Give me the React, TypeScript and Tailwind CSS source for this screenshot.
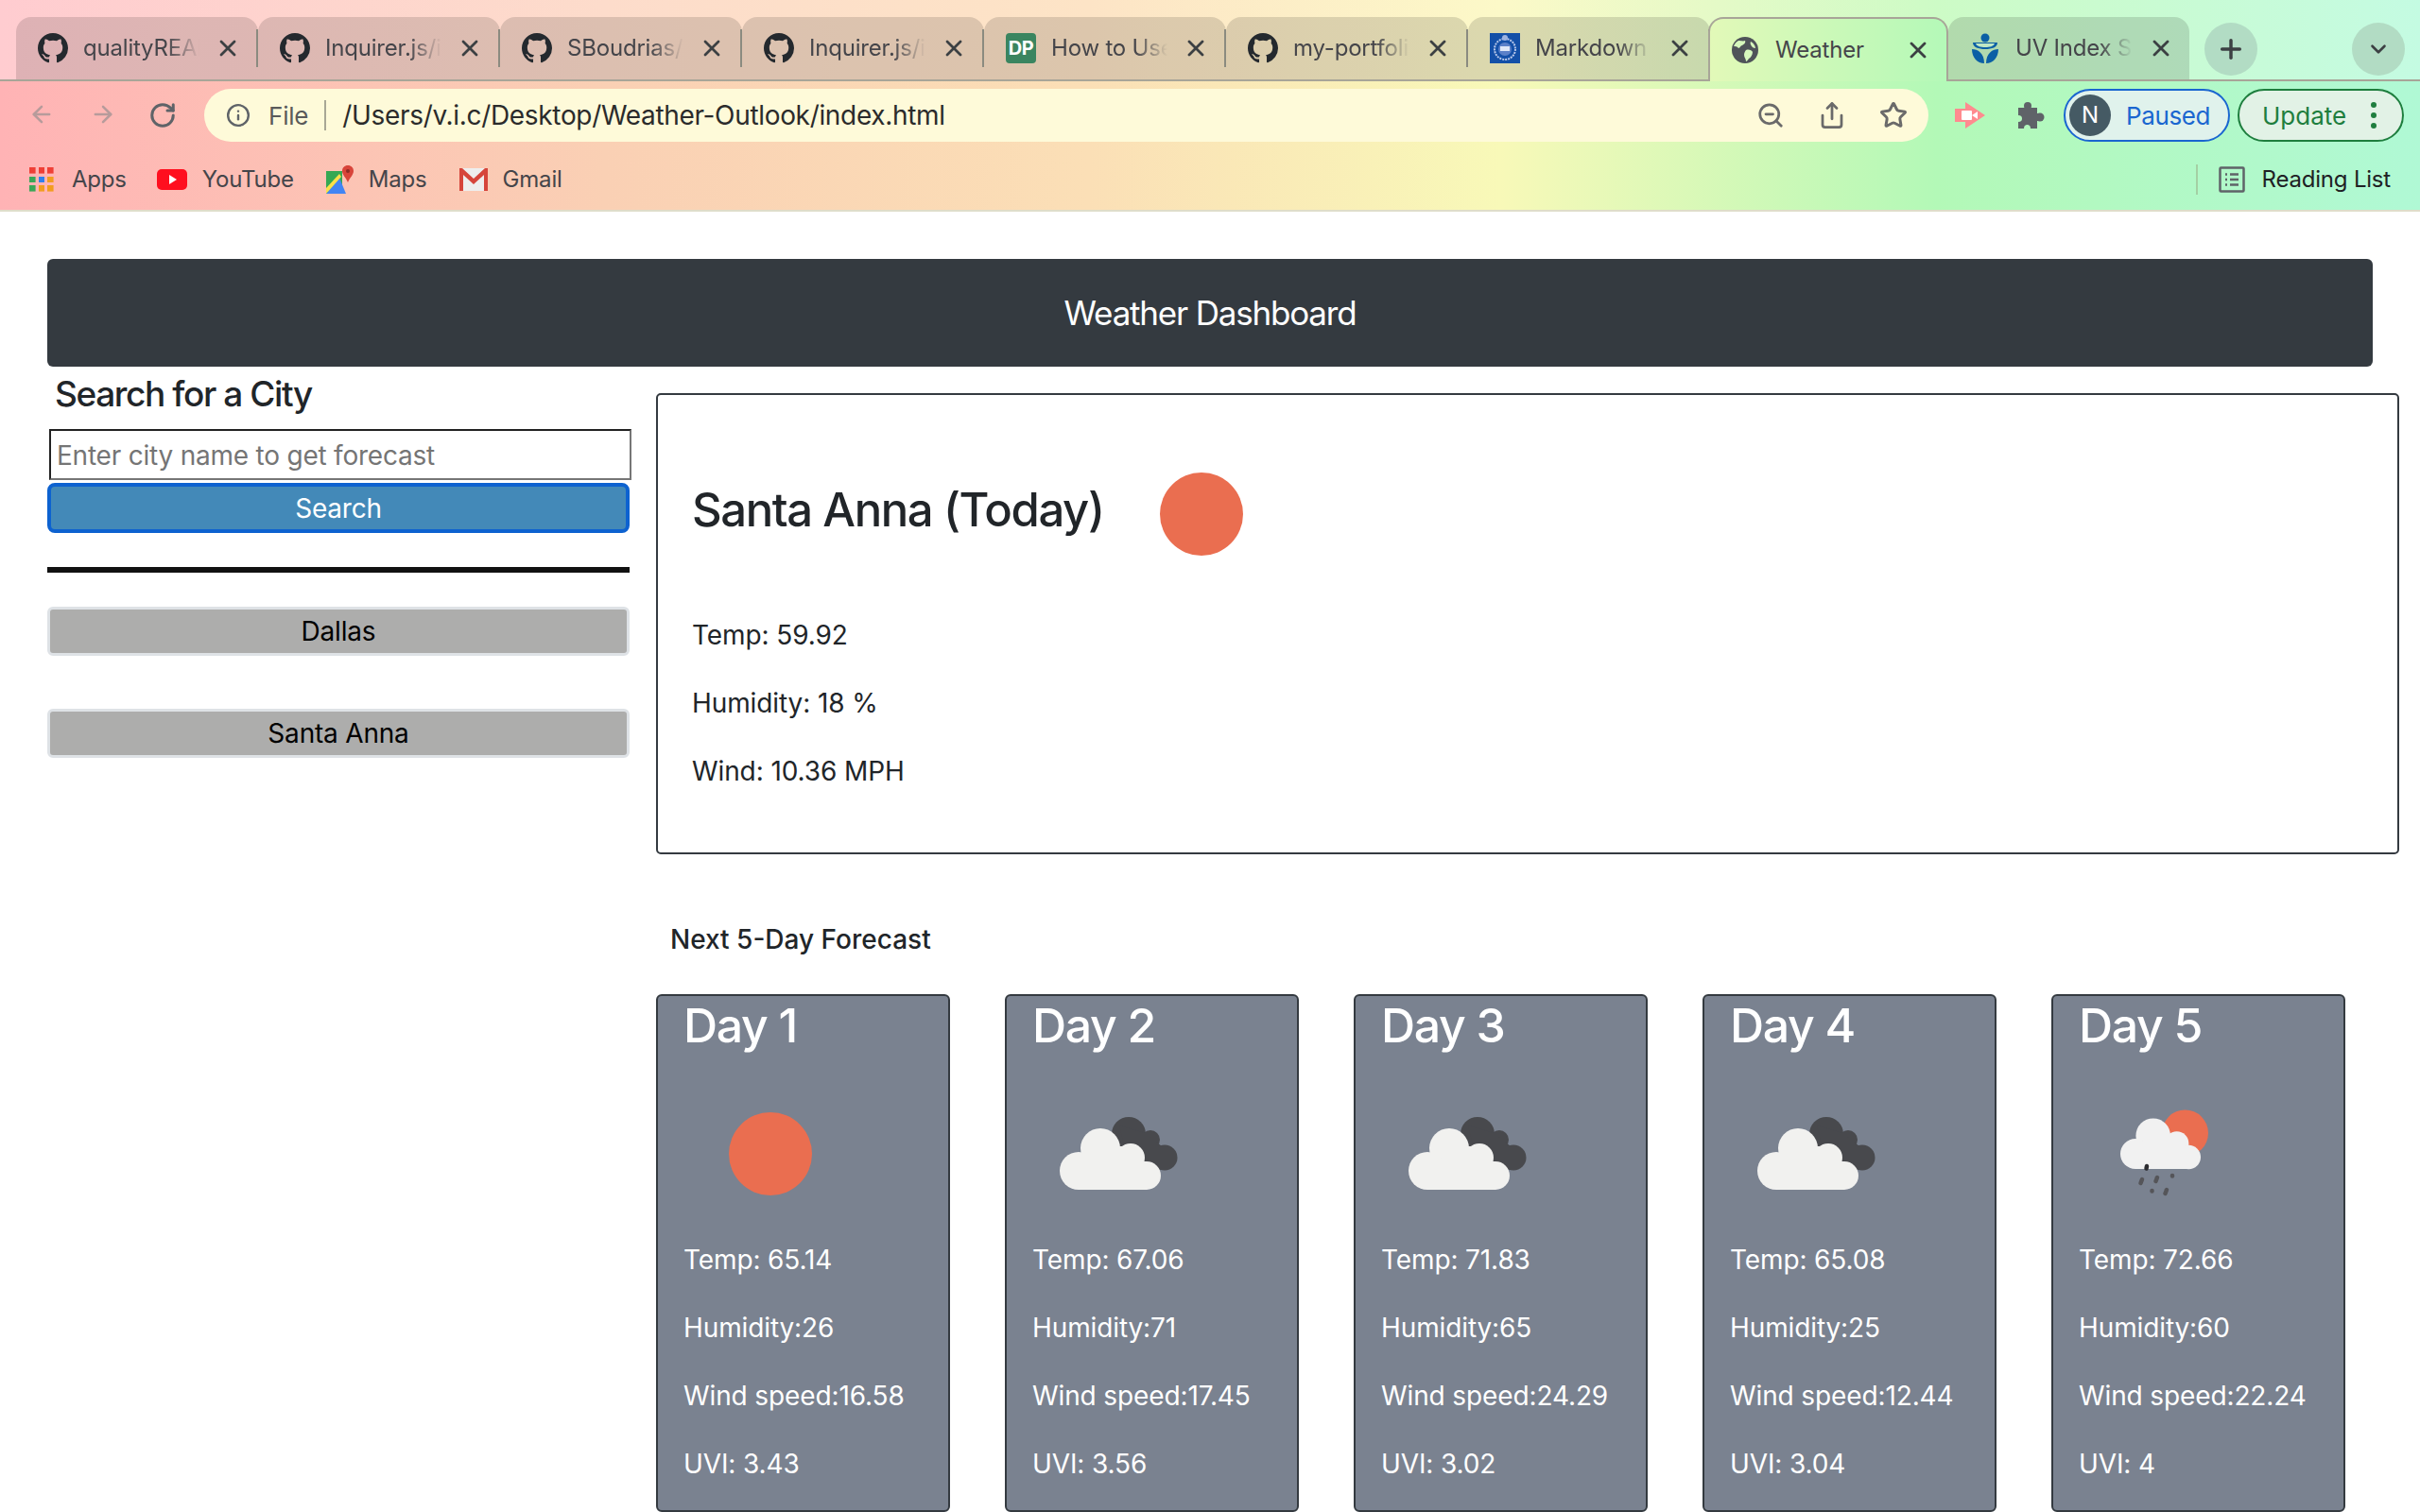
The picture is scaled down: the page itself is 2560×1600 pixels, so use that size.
import { ArrowLeft, ArrowRight, RotateCw, Info, ZoomOut, Share, Star, Plus, ChevronDown, X } from "lucide-react";
import type { ReactNode } from "react";

const ghPath = "M8 0C3.58 0 0 3.58 0 8c0 3.54 2.29 6.53 5.47 7.59.4.07.55-.17.55-.38 0-.19-.01-.82-.01-1.49-2.01.37-2.53-.49-2.69-.94-.09-.23-.48-.94-.82-1.13-.28-.15-.68-.52-.01-.53.63-.01 1.08.58 1.23.82.72 1.21 1.87.87 2.33.66.07-.52.28-.87.51-1.07-1.78-.2-3.64-.89-3.64-3.95 0-.87.31-1.59.82-2.15-.08-.2-.36-1.02.08-2.12 0 0 .67-.21 2.2.82.64-.18 1.32-.27 2-.27.68 0 1.36.09 2 .27 1.53-1.04 2.2-.82 2.2-.82.44 1.1.16 1.92.08 2.12.51.56.82 1.27.82 2.15 0 3.07-1.87 3.75-3.65 3.95.29.25.54.73.54 1.48 0 1.07-.01 1.93-.01 2.2 0 .21.15.46.55.38A8.013 8.013 0 0016 8c0-4.42-3.58-8-8-8z";

const GitHubIcon = () => (
  <svg viewBox="0 0 16 16" className="w-8 h-8 shrink-0"><path d={ghPath} fill="#24292e" /></svg>
);
const DpIcon = () => (
  <div className="w-8 h-8 shrink-0 rounded-sm bg-[#3a8560] text-white text-[20px] font-bold flex items-center justify-center leading-none tracking-tight">DP</div>
);
const SealIcon = () => (
  <svg viewBox="0 0 32 32" className="w-8 h-8 shrink-0">
    <rect width="32" height="32" fill="#1450a8" />
    <circle cx="16" cy="17" r="11" fill="none" stroke="#b9c8ea" strokeWidth="2" strokeDasharray="2 1" />
    <circle cx="16" cy="17" r="7" fill="#5b80c8" />
    <rect x="11" y="14" width="10" height="5" fill="#dfe7f7" />
    <circle cx="16" cy="5" r="3" fill="#9db3e0" />
  </svg>
);
const GlobeIcon = () => (
  <svg viewBox="0 0 32 32" className="w-8 h-8 shrink-0">
    <circle cx="16" cy="16" r="14" fill="#4f5359" />
    <path d="M9 6c3 0 5 1 7 0 1 2-1 4-3 5-2 0-2 3-4 3-1-2-4-2-5-2 1-3 3-5 5-6zM17 16c3-1 6 0 7 2 0 3-2 6-4 7-1 1-2 3-3 3 0-3-2-4-2-7 0-2 1-4 2-5zM22 7c2 1 5 4 5 7-2 0-3-1-4-2-1-2-2-3-1-5z" fill="#d6f7bd" />
  </svg>
);
const EpaIcon = () => (
  <svg viewBox="0 0 32 32" className="w-8 h-8 shrink-0">
    <circle cx="16" cy="5" r="4.5" fill="#0b5fa5" />
    <path d="M3 10h26c0 5-6 7-13 7S3 15 3 10z" fill="#0b5fa5" />
    <path d="M6 11h20c-1 3-5 4-10 4s-9-1-10-4z" fill="#bfe7c4" />
    <path d="M2 17c6 0 13 4 13 15C8 32 2 26 2 17zM30 17c-6 0-13 4-13 15 7 0 13-6 13-15z" fill="#0b5fa5" />
  </svg>
);

const tabs: { icon: ReactNode; label: string; active?: boolean }[] = [
  { icon: <GitHubIcon />, label: "qualityREADME" },
  { icon: <GitHubIcon />, label: "Inquirer.js/inquirer" },
  { icon: <GitHubIcon />, label: "SBoudrias/Inquirer" },
  { icon: <GitHubIcon />, label: "Inquirer.js/inquirer" },
  { icon: <DpIcon />, label: "How to Use" },
  { icon: <GitHubIcon />, label: "my-portfolio" },
  { icon: <SealIcon />, label: "Markdown syntax" },
  { icon: <GlobeIcon />, label: "Weather", active: true },
  { icon: <EpaIcon />, label: "UV Index Scale" },
];

function Tab({ icon, label, active, last }: { icon: ReactNode; label: string; active?: boolean; last?: boolean }) {
  if (active) {
    return (
      <div className="w-[254px] h-[68px] -ml-[2px] -mb-[2px] shrink-0 flex items-center pl-[21px] pr-[16px] gap-[16px] border-2 border-b-0 border-[#a8a598] rounded-t-[16px] bg-[linear-gradient(90deg,#e2f9b8,#b4f9b8)]">
        {icon}
        <span className="flex-1 overflow-hidden whitespace-nowrap text-[24px] tracking-[-0.2px] text-[#45454a]">{label}</span>
        <X className="w-[28px] h-[28px] text-[#3c4043]" strokeWidth={2.4} />
      </div>
    );
  }
  return (
    <div className={`${last ? "w-[255px] rounded-tr-[16px]" : "w-[256px]"} h-[66px] shrink-0 flex items-center bg-black/13 rounded-t-[16px]`}>
      <div className="flex-1 min-w-0 flex items-center pl-[23px] pr-[16px] gap-[16px]">
        {icon}
        <span className="flex-1 min-w-0 overflow-hidden whitespace-nowrap text-[24px] tracking-[-0.2px] text-[#45454a] [mask-image:linear-gradient(to_right,black_72%,transparent_100%)]">{label}</span>
        <X className="w-[28px] h-[28px] shrink-0 text-[#3c4043]" strokeWidth={2.4} />
      </div>
      {!last && <div className="w-[2px] h-[40px] bg-[#8b8b80] shrink-0" />}
    </div>
  );
}

const AppsIcon = () => {
  const c = ["#ef3f36", "#ef3f36", "#ef3f36", "#3aa757", "#2f80ed", "#f29d1f", "#3aa757", "#f29d1f", "#f29d1f"];
  return (
    <div className="grid grid-cols-3 gap-[3px] w-[26px] shrink-0">
      {c.map((b, i) => (
        <svg key={i} viewBox="0 0 6 6" className="w-[6.6px] h-[6.6px]"><rect width="6" height="6" fill={b} /></svg>
      ))}
    </div>
  );
};
const YouTubeIcon = () => (
  <svg viewBox="0 0 32 22" className="w-8 h-[22px] shrink-0">
    <rect width="32" height="22" rx="5" fill="#ff0f1f" />
    <path d="M13 6l8 5-8 5z" fill="#fff" />
  </svg>
);
const MapsIcon = () => (
  <svg viewBox="0 0 30 30" className="w-[30px] h-[30px] shrink-0">
    <path d="M1 6h17v24H1z" fill="#35a853" />
    <path d="M1 30L15 13l7 17z" fill="#4285f4" />
    <path d="M1 24L15 9l2 3L1 30z" fill="#fbe14a" />
    <path d="M24 0c-3.500 0-6 2.500-6 6 0 4 4 7 6 12 2-5 6-8 6-12 0-3.500-2.500-6-6-6z" fill="#d8443a" />
    <circle cx="24" cy="6" r="2" fill="#8f2a24" />
  </svg>
);
const GmailIcon = () => (
  <svg viewBox="0 0 32 26" className="w-8 h-[26px] shrink-0">
    <rect x="1" y="1" width="30" height="24" fill="#eeeeee" />
    <path d="M1 25V1h3l12 11L28 1h3v24h-4V8L16 18 5 8v17z" fill="#d6453b" />
  </svg>
);
const ReadingIcon = () => (
  <svg viewBox="0 0 28 28" className="w-7 h-7 shrink-0" fill="none" stroke="#5f6368" strokeWidth="2.500">
    <rect x="1.500" y="1.500" width="25" height="25" rx="1" />
    <path d="M7 8.500h2M12 8.500h9M7 14h2M12 14h9M7 19.500h2M12 19.500h9" />
  </svg>
);
const ExtIcon = () => (
  <svg viewBox="0 0 32 28" className="w-8 h-7 shrink-0">
    <path d="M11 0l21 14-21 14v-7H0V7h11z" fill="#ff8b8f" />
    <rect x="7" y="9" width="11" height="10" rx="1" fill="#fff" />
    <path d="M18 14l6-4v8z" fill="#fff" />
  </svg>
);
const PuzzleIcon = () => (
  <svg viewBox="0 0 30 28" className="w-[30px] h-7 shrink-0">
    <g fill="#5f6368">
      <circle cx="12" cy="4" r="4" />
      <path d="M2 6h20v7h-4v7h4v8h-7c0-3-1.500-4-3.500-4S8 25 8 28H2v-7c3 0 4-1.500 4-3.500S5 14 2 14z" />
      <circle cx="25" cy="16" r="4.500" />
      <rect x="18" y="12" width="6" height="8" />
    </g>
  </svg>
);

const Sun = () => (
  <svg viewBox="0 0 88 88" className="w-[88px] h-[88px] shrink-0"><circle cx="44" cy="44" r="44" fill="#ea6e50" /></svg>
);
const Clouds = () => (
  <svg viewBox="0 0 160 160" className="w-[160px] h-[160px]">
    <g fill="#48494d">
      <circle cx="90" cy="59" r="18" /><circle cx="113" cy="65" r="10" /><circle cx="128" cy="84" r="13.500" />
      <path d="M80 50L108 58 125 72 125 97 90 90z" />
    </g>
    <g fill="#f1f1ef">
      <circle cx="60" cy="74" r="21" /><circle cx="37" cy="98" r="20" /><circle cx="92" cy="84" r="15" /><circle cx="109" cy="103" r="15" />
      <rect x="37" y="88" width="72" height="30" /><rect x="55" y="72" width="40" height="30" />
    </g>
  </svg>
);
const RainSun = () => (
  <svg viewBox="0 0 160 160" className="w-[160px] h-[160px]">
    <circle cx="100.500" cy="58" r="24.500" fill="#ea6e50" />
    <g fill="#f1f1f1">
      <circle cx="66.700" cy="60.700" r="18.300" /><circle cx="48" cy="80" r="16" /><circle cx="91.700" cy="69" r="12.700" /><circle cx="104.300" cy="83.500" r="12.700" />
      <rect x="48" y="74" width="56" height="22" /><rect x="60" y="60" width="32" height="20" />
    </g>
    <g stroke="#555559" strokeWidth="4.500" strokeLinecap="round">
      <path d="M60 93l-.5 2.500" stroke="#2c2c30" /><path d="M55 107l-1.500 4" /><path d="M71 105l-1.500 4" /><path d="M87 103v.5" /><path d="M65.500 119v.5" /><path d="M81 118l-1.500 4" />
    </g>
  </svg>
);

const days = [
  { n: "Day 1", icon: <Sun />, t: "65.14", h: "26", w: "16.58", u: "3.43" },
  { n: "Day 2", icon: <Clouds />, t: "67.06", h: "71", w: "17.45", u: "3.56" },
  { n: "Day 3", icon: <Clouds />, t: "71.83", h: "65", w: "24.29", u: "3.02" },
  { n: "Day 4", icon: <Clouds />, t: "65.08", h: "25", w: "12.44", u: "3.04" },
  { n: "Day 5", icon: <RainSun />, t: "72.66", h: "60", w: "22.24", u: "4" },
];

export default function App() {
  return (
    <div className="w-[2560px] h-[1600px] overflow-hidden bg-white [font-family:Inter,sans-serif] text-[#212529]">
      {/* Browser chrome */}
      <div className="h-[86px] pt-[18px] pl-[17px] flex border-b-2 border-[#a8a598] bg-[linear-gradient(90deg,#ffccd0_0%,#fddccb_25%,#fde4c6_45%,#fcf9c8_62%,#cdfbc6_80%,#c4fbe2_100%)]">
        {tabs.map((t, i) => (
          <Tab key={i} icon={t.icon} label={t.label} active={t.active} last={i === 8} />
        ))}
        <div className="ml-[16px] mt-[6px] w-[56px] h-[56px] rounded-full bg-[#b2dcc4] flex items-center justify-center">
          <Plus className="w-[32px] h-[32px] text-[#3c4043]" strokeWidth={2.6} />
        </div>
        <div className="ml-[100px] mt-[6px] w-[56px] h-[56px] rounded-full bg-[#b2dcc4] flex items-center justify-center">
          <ChevronDown className="w-[26px] h-[26px] text-[#3c4043]" strokeWidth={2.4} />
        </div>
      </div>
      <div className="h-[138px] border-b-2 border-[#dfddca] bg-[linear-gradient(90deg,#ffb3b5_0%,#fad0b4_25%,#fbdfb6_45%,#f8f9b8_62%,#b3f9b7_80%,#b0f9d5_100%)]">
        <div className="h-[72px] flex items-center">
          <div className="ml-[30px] flex gap-[37px]">
            <ArrowLeft className="w-[28px] h-[28px] text-[#b79b9b]" strokeWidth={2.2} />
            <ArrowRight className="w-[28px] h-[28px] text-[#b79b9b]" strokeWidth={2.2} />
            <RotateCw className="w-[30px] h-[30px] -ml-[3px] text-[#5f6368]" strokeWidth={2.4} />
          </div>
          <div className="ml-[29px] w-[1824px] h-[56px] rounded-full bg-[#fefad9] flex items-center pl-[23px] pr-[22px]">
            <Info className="w-[26px] h-[26px] text-[#5f6368]" strokeWidth={2.2} />
            <span className="ml-[19px] text-[26px] tracking-[-0.2px] text-[#5a5a5a]">File</span>
            <div className="ml-[17px] w-[2px] h-[32px] bg-[#a9a795]" />
            <span className="ml-[17px] text-[28px] tracking-[-0.33px] text-[#2b2b2b]">/Users/v.i.c/Desktop/Weather-Outlook/index.html</span>
            <div className="ml-auto flex gap-[35px]">
              <ZoomOut className="w-[30px] h-[30px] text-[#6a6a6a]" strokeWidth={2.2} />
              <Share className="w-[30px] h-[30px] text-[#6a6a6a]" strokeWidth={2.2} />
              <Star className="w-[30px] h-[30px] text-[#6a6a6a]" strokeWidth={2.4} />
            </div>
          </div>
          <div className="ml-[28px]"><ExtIcon /></div>
          <div className="ml-[33px]"><PuzzleIcon /></div>
          <div className="ml-[20px] w-[176px] h-[56px] rounded-full border-2 border-[#1a66d0] bg-[#e0f2ec] flex items-center pl-[4px]">
            <div className="w-[44px] h-[44px] rounded-full bg-[#455a64] text-white text-[24px] flex items-center justify-center">N</div>
            <span className="ml-[16px] text-[26px] tracking-[-0.4px] text-[#1a66d0]">Paused</span>
          </div>
          <div className="ml-[8px] w-[176px] h-[56px] rounded-full border-2 border-[#1e7e3e] bg-[#e2f2e6] flex items-center pl-[24px]">
            <span className="text-[26px] text-[#1e7e3e]">Update</span>
            <div className="ml-[26px] flex flex-col gap-[5px]">
              <div className="w-[6px] h-[6px] rounded-full bg-[#1e7e3e]" />
              <div className="w-[6px] h-[6px] rounded-full bg-[#1e7e3e]" />
              <div className="w-[6px] h-[6px] rounded-full bg-[#1e7e3e]" />
            </div>
          </div>
        </div>
        <div className="h-[64px] flex items-center text-[24px] tracking-[-0.2px] text-[#45454a]">
          <div className="ml-[31px]"><AppsIcon /></div>
          <span className="ml-[19px]">Apps</span>
          <div className="ml-[32px]"><YouTubeIcon /></div>
          <span className="ml-[16px]">YouTube</span>
          <div className="ml-[33px]"><MapsIcon /></div>
          <span className="ml-[16px]">Maps</span>
          <div className="ml-[33px]"><GmailIcon /></div>
          <span className="ml-[15px]">Gmail</span>
          <div className="ml-auto w-[2px] h-[32px] bg-[#a4d0a4]" />
          <div className="ml-[22px]"><ReadingIcon /></div>
          <span className="ml-[18px] mr-[31px] text-[#202124]">Reading List</span>
        </div>
      </div>

      {/* Page */}
      <div className="pt-[50px]">
        <div className="ml-[50px] w-[2460px] h-[114px] rounded-[6px] bg-[#343a40] text-white flex items-center justify-center text-[35px] tracking-[-1.2px]">Weather Dashboard</div>
        <div className="flex">
          <div className="ml-[50px] w-[616px] shrink-0">
            <h2 className="pl-[8px] h-[58px] leading-[58px] text-[37px] font-medium tracking-[-1.4px]">Search for a City</h2>
            <input
              readOnly
              placeholder="Enter city name to get forecast"
              className="block mt-[8px] ml-[2px] w-[616px] h-[54px] px-[6px] pt-[1px] bg-white border-2 border-t-[#222] border-l-[#222] border-r-[#767676] border-b-[#767676] text-[28px] tracking-[-0.22px] placeholder:text-[#757575] outline-none"
            />
            <button className="block mt-[3px] w-[616px] h-[53px] rounded-[8px] border-4 border-[#0d62d0] bg-[#4389b8] text-white text-[28px] tracking-[-0.2px]">Search</button>
            <div className="mt-[36px] h-[6px] bg-[#111]" />
            <button className="block mt-[36px] w-[616px] h-[52px] rounded-[6px] border-[3px] border-[#dee2e6] bg-[#adadac] text-black text-[28px] tracking-[-0.2px]">Dallas</button>
            <button className="block mt-[56px] w-[616px] h-[52px] rounded-[6px] border-[3px] border-[#dee2e6] bg-[#adadac] text-black text-[28px] tracking-[-0.2px]">Santa Anna</button>
          </div>
          <div className="ml-[28px] w-[1844px] pt-[28px]">
            <div className="h-[488px] rounded-[5px] border-2 border-[#343a40] pl-[36px] pt-[82px]">
              <div className="flex items-center">
                <h1 className="pb-[8px] text-[49px] font-medium tracking-[-1.4px]">Santa Anna (Today)</h1>
                <div className="ml-[59px]"><Sun /></div>
              </div>
              <div className="mt-[60px] flex flex-col gap-[24px] text-[28px] leading-[48px] tracking-[-0.1px]">
                <p>Temp: 59.92</p>
                <p>Humidity: 18 %</p>
                <p>Wind: 10.36 MPH</p>
              </div>
            </div>
            <h3 className="ml-[15px] mt-[66px] text-[28px] leading-[48px] font-medium">Next 5-Day Forecast</h3>
            <div className="mt-[34px] flex gap-[58px]">
              {days.map((d) => (
                <div key={d.n} className="w-[311px] h-[548px] shrink-0 rounded-[6px] border-2 border-[#343a40] bg-[#7a8290] text-white pl-[27px] pt-[1px]">
                  <div className="h-[60px] leading-[60px] text-[50px] font-medium tracking-[-1.3px]">{d.n}</div>
                  <div className="h-[160px] w-[240px] -ml-[28px] mt-[26px] flex items-center justify-center">{d.icon}</div>
                  <div className="mt-[8px] flex flex-col gap-[24px] text-[28px] leading-[48px] tracking-[-0.12px]">
                    <p>Temp: {d.t}</p>
                    <p>Humidity:{d.h}</p>
                    <p>Wind speed:{d.w}</p>
                    <p>UVI: {d.u}</p>
                  </div>
                </div>
              ))}
            </div>
          </div>
        </div>
      </div>
    </div>
  );
}
